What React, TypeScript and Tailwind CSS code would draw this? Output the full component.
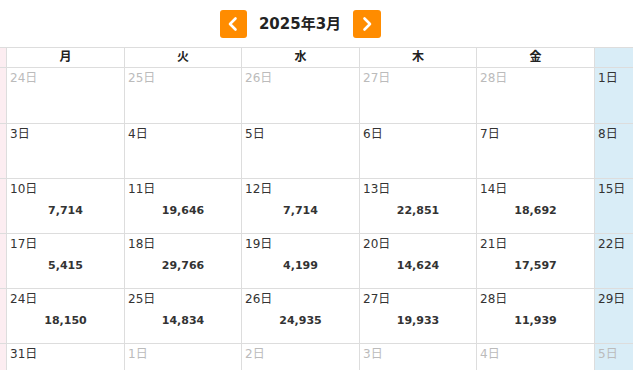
import React from "react";

type Cell = { d: number; other?: boolean; v?: string };

const weeks: Cell[][] = [
  [{ d: 23, other: true }, { d: 24, other: true }, { d: 25, other: true }, { d: 26, other: true }, { d: 27, other: true }, { d: 28, other: true }, { d: 1 }],
  [{ d: 2 }, { d: 3 }, { d: 4 }, { d: 5 }, { d: 6 }, { d: 7 }, { d: 8 }],
  [{ d: 9 }, { d: 10, v: "7,714" }, { d: 11, v: "19,646" }, { d: 12, v: "7,714" }, { d: 13, v: "22,851" }, { d: 14, v: "18,692" }, { d: 15 }],
  [{ d: 16 }, { d: 17, v: "5,415" }, { d: 18, v: "29,766" }, { d: 19, v: "4,199" }, { d: 20, v: "14,624" }, { d: 21, v: "17,597" }, { d: 22 }],
  [{ d: 23 }, { d: 24, v: "18,150" }, { d: 25, v: "14,834" }, { d: 26, v: "24,935" }, { d: 27, v: "19,933" }, { d: 28, v: "11,939" }, { d: 29 }],
  [{ d: 30 }, { d: 31 }, { d: 1, other: true }, { d: 2, other: true }, { d: 3, other: true }, { d: 4, other: true }, { d: 5, other: true }],
];

const days = ["日", "月", "火", "水", "木", "金", "土"];

function bgFor(i: number) {
  if (i === 0) return "bg-[#fcedf1]";
  if (i === 6) return "bg-[#d9edf7]";
  return "bg-white";
}

export default function App() {
  return (
    <div
      className="w-[633px] h-[370px] overflow-hidden bg-white text-[#333]"
      style={{ fontFamily: '"DejaVu Sans", "Noto Sans CJK JP", sans-serif' }}
    >
      <div className="ml-[-110px] w-[821px]">
        <div className="flex items-center justify-center gap-3 pt-[10px] pb-[9px]">
          <button className="w-[27px] h-[28px] rounded-[3px] bg-[#ff8c00] flex items-center justify-center">
            <svg width="14" height="16" viewBox="0 0 14 16">
              <path d="M9.5 2.5 L4 8 L9.5 13.5" fill="none" stroke="white" strokeWidth="2.6" strokeLinecap="round" strokeLinejoin="round" />
            </svg>
          </button>
          <div className="text-[15px] font-bold leading-[20px] text-[#222]">2025年3月</div>
          <button className="w-[28px] h-[28px] rounded-[3px] bg-[#ff8c00] flex items-center justify-center">
            <svg width="14" height="16" viewBox="0 0 14 16">
              <path d="M4.5 2.5 L10 8 L4.5 13.5" fill="none" stroke="white" strokeWidth="2.6" strokeLinecap="round" strokeLinejoin="round" />
            </svg>
          </button>
        </div>
        <div className="grid grid-cols-[116px_117px_116px_117px_116px_117px_116px] gap-px bg-[#dddddd] pt-px">
          {days.map((d, i) => (
            <div key={d} className={`${bgFor(i)} h-[19px] leading-[19px] text-center text-[12px] font-bold text-[#222]`}>
              {d}
            </div>
          ))}
          {weeks.map((w, wi) =>
            w.map((c, i) => (
              <div
                key={`${wi}-${i}`}
                className={`${bgFor(i)} ${wi === 0 ? "h-[55px]" : "h-[54px]"} pl-[3px] pt-px flex flex-col`}
              >
                <div className={`text-[12px] leading-[18px] ${c.other ? "text-[#bbbbbb]" : "text-[#333]"}`}>
                  {c.d}日
                </div>
                {c.v && (
                  <div className="mt-[5px] pr-[3px] text-center text-[11px] leading-[16px] font-bold text-[#333]">
                    {c.v}
                  </div>
                )}
              </div>
            ))
          )}
        </div>
      </div>
    </div>
  );
}
